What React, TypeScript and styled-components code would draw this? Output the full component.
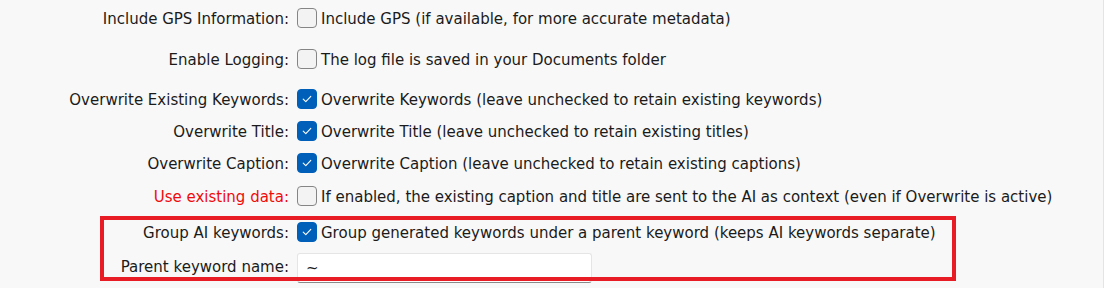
import React from "react";
import styled, { createGlobalStyle } from "styled-components";

const Global = createGlobalStyle`
  html, body { margin: 0; padding: 0; background: #f8f8f8; }
  body { font-family: "DejaVu Sans", Tahoma, sans-serif; font-size: 15px; color: #1b1b1b; }
`;

const Page = styled.div`
  position: relative;
  width: 1104px;
  height: 288px;
  overflow: hidden;
  padding-top: 3px;
  box-sizing: border-box;
  border-right: 1px solid #e4e4e4;
`;

const Row = styled.div<{ $gap?: number }>`
  display: grid;
  grid-template-columns: 289px 1fr;
  column-gap: 8px;
  align-items: center;
  height: 32px;
  margin-top: ${(p) => p.$gap ?? 0}px;
`;

const Label = styled.div<{ $warn?: boolean }>`
  text-align: right;
  white-space: nowrap;
  color: ${(p) => (p.$warn ? "#f00a0a" : "#1b1b1b")};
`;

const Field = styled.label`
  display: flex;
  align-items: center;
  gap: 4px;
  white-space: nowrap;
`;

const Box = styled.span<{ $checked?: boolean }>`
  width: 20px;
  height: 20px;
  box-sizing: border-box;
  border-radius: 4px;
  flex: none;
  display: inline-flex;
  align-items: center;
  justify-content: center;
  background: ${(p) => (p.$checked ? "#005fb8" : "#f3f3f3")};
  border: 1px solid ${(p) => (p.$checked ? "#005fb8" : "#858585")};
  margin-top: -2px;
`;

const TextInput = styled.div`
  width: 295px;
  height: 30px;
  box-sizing: border-box;
  background: #ffffff;
  border: 1px solid #e5e5e5;
  border-bottom: 1px solid #8a8a8a;
  border-radius: 3px;
  display: flex;
  align-items: center;
  padding-left: 8px;
  margin-top: 3px;
`;

const Group = styled.div`
  position: relative;
  display: flow-root;
`;

const Highlight = styled.div`
  position: absolute;
  left: 100px;
  top: 3px;
  width: 856px;
  height: 65px;
  box-sizing: border-box;
  border: 4px solid #e81c24;
  pointer-events: none;
`;

const Check = () => (
  <svg width="12" height="12" viewBox="0 0 12 12">
    <path d="M2.2 6.2 L4.8 8.7 L9.8 3.4" fill="none" stroke="#ffffff" strokeWidth="1.1" strokeLinecap="round" strokeLinejoin="round" />
  </svg>
);

const CheckRow = ({ label, text, checked, warn, gap }: { label: string; text: string; checked?: boolean; warn?: boolean; gap?: number }) => (
  <Row $gap={gap}>
    <Label $warn={warn}>{label}</Label>
    <Field>
      <Box $checked={checked}>{checked && <Check />}</Box>
      <span>{text}</span>
    </Field>
  </Row>
);

export default function App() {
  return (
    <>
      <Global />
      <Page>
        <CheckRow label="Include GPS Information:" text="Include GPS (if available, for more accurate metadata)" />
        <CheckRow gap={9} label="Enable Logging:" text="The log file is saved in your Documents folder" />
        <CheckRow gap={8} checked label="Overwrite Existing Keywords:" text="Overwrite Keywords (leave unchecked to retain existing keywords)" />
        <CheckRow checked label="Overwrite Title:" text="Overwrite Title (leave unchecked to retain existing titles)" />
        <CheckRow checked label="Overwrite Caption:" text="Overwrite Caption (leave unchecked to retain existing captions)" />
        <CheckRow gap={1} warn label="Use existing data:" text="If enabled, the existing caption and title are sent to the AI as context (even if Overwrite is active)" />
        <Group>
          <CheckRow gap={4} checked label="Group AI keywords:" text="Group generated keywords under a parent keyword (keeps AI keywords separate)" />
          <Row $gap={1}>
            <Label>Parent keyword name:</Label>
            <TextInput>~</TextInput>
          </Row>
          <Highlight />
        </Group>
      </Page>
    </>
  );
}
